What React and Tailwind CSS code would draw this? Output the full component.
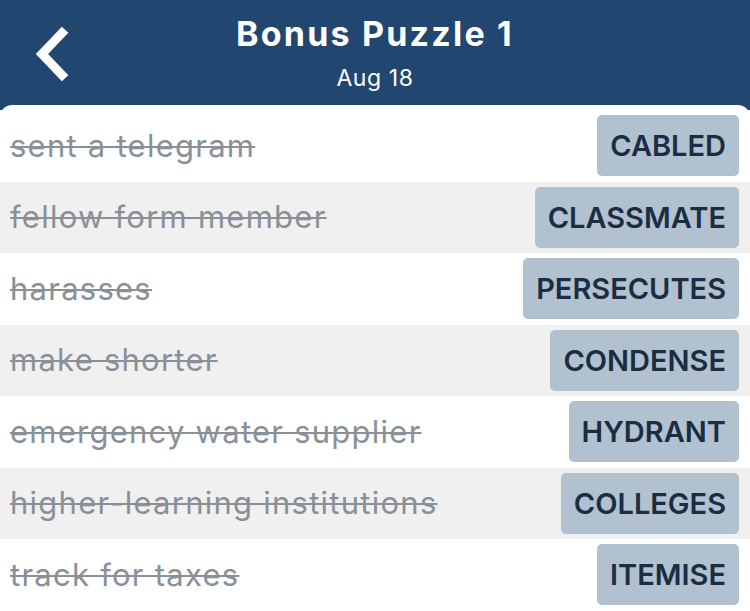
import React from "react";

const rows = [
  ["sent a telegram", "CABLED"],
  ["fellow form member", "CLASSMATE"],
  ["harasses", "PERSECUTES"],
  ["make shorter", "CONDENSE"],
  ["emergency water supplier", "HYDRANT"],
  ["higher-learning institutions", "COLLEGES"],
  ["track for taxes", "ITEMISE"],
];

export default function App() {
  return (
    <div
      className="w-[750px] h-[611px] overflow-hidden bg-[#21466f]"
      style={{ fontFamily: "Inter, 'Noto Sans', sans-serif" }}
    >
      <div className="relative h-[105px] flex flex-col items-center">
        <svg
          className="absolute left-[30px] top-[22px]"
          width="44"
          height="64"
          viewBox="0 0 44 64"
        >
          <path
            d="M32 11 L12 32 L32 53"
            fill="none"
            stroke="white"
            strokeWidth="9"
            strokeLinecap="square"
            strokeLinejoin="miter"
            strokeMiterlimit="2"
          />
        </svg>
        <div className="mt-[12px] text-[34px] leading-[44px] font-bold tracking-[2.2px] text-white">
          Bonus Puzzle 1
        </div>
        <div className="mt-[8px] text-[23px] leading-[28px] tracking-[0.6px] text-white">
          Aug 18
        </div>
      </div>
      <div className="bg-white rounded-t-[12px] pt-[5px]">
        {rows.map(([clue, answer], i) => (
          <div
            key={i}
            className={`flex items-center justify-between h-[71.5px] pl-[10px] pr-[11px] ${
              i % 2 === 1 ? "bg-[#f0f0f0]" : "bg-white"
            }`}
          >
            <span className="text-[31px] tracking-[1.25px] text-[#8a9097] line-through decoration-[2px]">
              {clue}
            </span>
            <span className="h-[61px] flex items-center px-[13px] rounded-[5px] bg-[#b1c1cf] text-[#1b2d42] text-[29px] font-semibold">
              {answer}
            </span>
          </div>
        ))}
      </div>
    </div>
  );
}
